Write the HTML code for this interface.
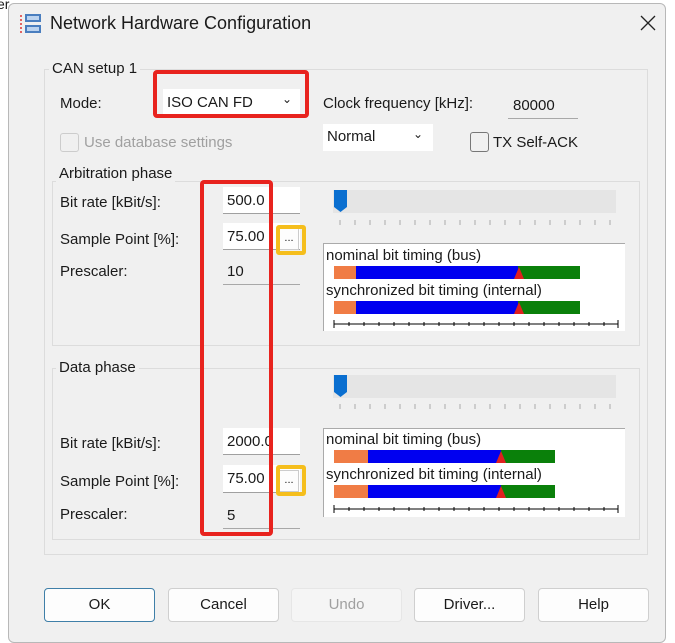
<!DOCTYPE html>
<html><head><style>
*{margin:0;padding:0;box-sizing:border-box}
body{width:675px;height:621px;background:#fff;position:relative;overflow:hidden;font-family:"Liberation Sans",sans-serif;font-size:15px;color:#1a1a1a}
.a{position:absolute}
.win{left:8px;top:3px;width:658px;height:640px;background:#f0f0f0;border:1px solid #b8b8b8;border-radius:6px}
.grp{border:1px solid #dcdcdc}
.lbl{background:#f0f0f0;padding:0 3px}
.fld{background:#fff;border-bottom:1px solid #a0a0a0;padding:5px 4px 3px;font-size:15px}
.dis{background:#f0f0f0;border:1px solid #e4e4e4;border-bottom:1px solid #a8a8a8}
.btn{background:#fdfdfd;border:1px solid #cfcfcf;border-radius:4px;text-align:center;line-height:31px;font-size:15px}
.red{border:4px solid #e8231e;border-radius:4px}
.yel{border:4px solid #f5be1c;border-radius:3px}
.dots{background:#fdfdfd;border:1px solid #ccc;font-size:11px;text-align:center;line-height:18px}
</style></head><body>
<div class="a" style="left:0;top:0;font-size:14px;left:-3px;top:-4px">er</div>
<div class="a win"></div>
<svg class="a" style="left:18px;top:13px" width="26" height="22"><rect x="7" y="1" width="16" height="8" fill="#4a7ebf"/><rect x="9" y="3" width="12" height="4" fill="#bcd3ef"/><rect x="7" y="12" width="16" height="8" fill="#4a7ebf"/><rect x="9" y="14" width="12" height="4" fill="#bcd3ef"/><path d="M3 2v18" stroke="#d33" stroke-width="1.5" stroke-dasharray="2 2"/></svg>
<div class="a" style="left:50px;top:13px;font-size:18px">Network Hardware Configuration</div>
<svg class="a" style="left:640px;top:15px" width="16" height="16"><path d="M1 1l14 14M15 1L1 15" stroke="#222" stroke-width="1.3"/></svg>

<div class="a grp" style="left:44px;top:69px;width:604px;height:486px"></div>
<div class="a lbl" style="left:49px;top:60px">CAN setup 1</div>
<div class="a" style="left:60px;top:95px">Mode:</div>
<div class="a fld" style="left:163px;top:89px;width:137px;height:27px;border:none">ISO CAN FD<span style="position:absolute;right:8px;top:3px;font-size:12px">⌄</span></div>
<div class="a red" style="left:153px;top:70px;width:156px;height:48px"></div>
<div class="a" style="left:323px;top:95px">Clock frequency [kHz]:</div>
<div class="a dis" style="left:508px;top:92px;width:70px;height:27px;padding:5px 5px;border-top:none;border-left:none;border-right:none">80000</div>
<div class="a" style="left:60px;top:133px;width:19px;height:19px;border:1px solid #ccc;border-radius:3px"></div>
<div class="a" style="left:84px;top:134px;color:#a0a0a0">Use database settings</div>
<div class="a fld" style="left:323px;top:124px;width:110px;height:27px;border:none;padding-top:4px">Normal<span style="position:absolute;right:10px;top:3px;font-size:12px">⌄</span></div>
<div class="a" style="left:470px;top:132px;width:19px;height:20px;border:1px solid #777;border-radius:3px"></div>
<div class="a" style="left:493px;top:134px">TX Self-ACK</div>

<div class="a grp" style="left:52px;top:181px;width:588px;height:165px"></div>
<div class="a lbl" style="left:56px;top:165px">Arbitration phase</div>
<div class="a" style="left:60px;top:194px">Bit rate [kBit/s]:</div>
<div class="a fld" style="left:223px;top:187px;width:77px;height:27px">500.0</div>
<div class="a" style="left:60px;top:231px">Sample Point [%]:</div>
<div class="a fld" style="left:223px;top:223px;width:77px;height:27px">75.00</div>
<div class="a dots" style="left:279px;top:228px;width:20px;height:22px">...</div>
<div class="a yel" style="left:276px;top:225px;width:30px;height:30px"></div>
<div class="a" style="left:60px;top:263px">Prescaler:</div>
<div class="a dis" style="left:223px;top:258px;width:77px;height:27px;padding:5px 4px;border:none;border-bottom:1px solid #a8a8a8">10</div>

<div class="a" style="left:333px;top:190px;width:283px;height:23px;background:#e5e5e5"></div>
<svg class="a" style="left:333px;top:190px" width="16" height="24"><path d="M1 0h13v17l-6.5 5-6.5-5z" fill="#0a6fd0"/></svg>
<svg class="a" style="left:333px;top:218px" width="290" height="8"><g stroke="#aaa"><path d="M7 2v5M22 2v5M37 2v5M52 2v5M67 2v5M82 2v5M97 2v5M112 2v5M127 2v5M142 2v5M157 2v5M172 2v5M187 2v5M202 2v5M217 2v5M232 2v5M247 2v5M262 2v5M277 2v5"/></g></svg>

<div class="a" style="left:323px;top:243px;width:302px;height:88px;background:#fff;border-top:1px solid #aaa;border-left:1px solid #aaa"></div>
<div class="a" style="left:326px;top:247px">nominal bit timing (bus)</div>
<svg class="a" style="left:333px;top:265px" width="250" height="16"><rect x="1" y="1" width="22" height="13" fill="#f07c45"/><rect x="23" y="1" width="162" height="13" fill="#0000f0"/><rect x="185" y="1" width="62" height="13" fill="#0a800a"/><path d="M181 14l5-12 5 12z" fill="#e02020"/></svg>
<div class="a" style="left:326px;top:282px">synchronized bit timing (internal)</div>
<svg class="a" style="left:333px;top:300px" width="250" height="16"><rect x="1" y="1" width="22" height="13" fill="#f07c45"/><rect x="23" y="1" width="162" height="13" fill="#0000f0"/><rect x="185" y="1" width="62" height="13" fill="#0a800a"/><path d="M181 14l5-12 5 12z" fill="#e02020"/></svg>
<svg class="a" style="left:333px;top:319px" width="290" height="10"><path d="M1 5h284M1 1v8M16 3v4M31 3v4M46 3v4M61 3v4M76 3v4M91 3v4M106 3v4M121 3v4M136 3v4M151 3v4M166 3v4M181 3v4M196 3v4M211 3v4M226 3v4M241 3v4M256 3v4M271 3v4M285 1v8" stroke="#000"/></svg>

<div class="a grp" style="left:52px;top:368px;width:588px;height:172px"></div>
<div class="a lbl" style="left:56px;top:359px">Data phase</div>
<div class="a" style="left:333px;top:375px;width:283px;height:23px;background:#e5e5e5"></div>
<svg class="a" style="left:333px;top:375px" width="16" height="24"><path d="M1 0h13v17l-6.5 5-6.5-5z" fill="#0a6fd0"/></svg>
<svg class="a" style="left:333px;top:402px" width="290" height="8"><g stroke="#aaa"><path d="M7 2v5M22 2v5M37 2v5M52 2v5M67 2v5M82 2v5M97 2v5M112 2v5M127 2v5M142 2v5M157 2v5M172 2v5M187 2v5M202 2v5M217 2v5M232 2v5M247 2v5M262 2v5M277 2v5"/></g></svg>
<div class="a" style="left:60px;top:435px">Bit rate [kBit/s]:</div>
<div class="a fld" style="left:223px;top:428px;width:77px;height:27px">2000.0</div>
<div class="a" style="left:60px;top:473px">Sample Point [%]:</div>
<div class="a fld" style="left:223px;top:465px;width:77px;height:28px">75.00</div>
<div class="a dots" style="left:279px;top:470px;width:20px;height:22px">...</div>
<div class="a yel" style="left:276px;top:465px;width:30px;height:31px"></div>
<div class="a" style="left:60px;top:506px">Prescaler:</div>
<div class="a dis" style="left:223px;top:502px;width:77px;height:27px;padding:5px 4px;border:none;border-bottom:1px solid #a8a8a8">5</div>

<div class="a" style="left:323px;top:428px;width:302px;height:89px;background:#fff;border-top:1px solid #aaa;border-left:1px solid #aaa"></div>
<div class="a" style="left:326px;top:431px">nominal bit timing (bus)</div>
<svg class="a" style="left:333px;top:449px" width="250" height="16"><rect x="1" y="1" width="34" height="13" fill="#f07c45"/><rect x="35" y="1" width="133" height="13" fill="#0000f0"/><rect x="168" y="1" width="54" height="13" fill="#0a800a"/><path d="M163 14l5-12 5 12z" fill="#e02020"/></svg>
<div class="a" style="left:326px;top:466px">synchronized bit timing (internal)</div>
<svg class="a" style="left:333px;top:484px" width="250" height="16"><rect x="1" y="1" width="34" height="13" fill="#f07c45"/><rect x="35" y="1" width="133" height="13" fill="#0000f0"/><rect x="168" y="1" width="54" height="13" fill="#0a800a"/><path d="M163 14l5-12 5 12z" fill="#e02020"/></svg>
<svg class="a" style="left:333px;top:504px" width="290" height="10"><path d="M1 5h284M1 1v8M16 3v4M31 3v4M46 3v4M61 3v4M76 3v4M91 3v4M106 3v4M121 3v4M136 3v4M151 3v4M166 3v4M181 3v4M196 3v4M211 3v4M226 3v4M241 3v4M256 3v4M271 3v4M285 1v8" stroke="#000"/></svg>

<div class="a red" style="left:200px;top:180px;width:73px;height:356px"></div>

<div class="a btn" style="left:44px;top:588px;width:111px;height:34px;border:1px solid #3f7fa8">OK</div>
<div class="a btn" style="left:168px;top:588px;width:111px;height:34px">Cancel</div>
<div class="a btn" style="left:291px;top:588px;width:111px;height:34px;background:#f5f5f5;color:#a0a0a0;border-color:#e6e6e6">Undo</div>
<div class="a btn" style="left:414px;top:588px;width:111px;height:34px">Driver...</div>
<div class="a btn" style="left:538px;top:588px;width:111px;height:34px">Help</div>
</body></html>
